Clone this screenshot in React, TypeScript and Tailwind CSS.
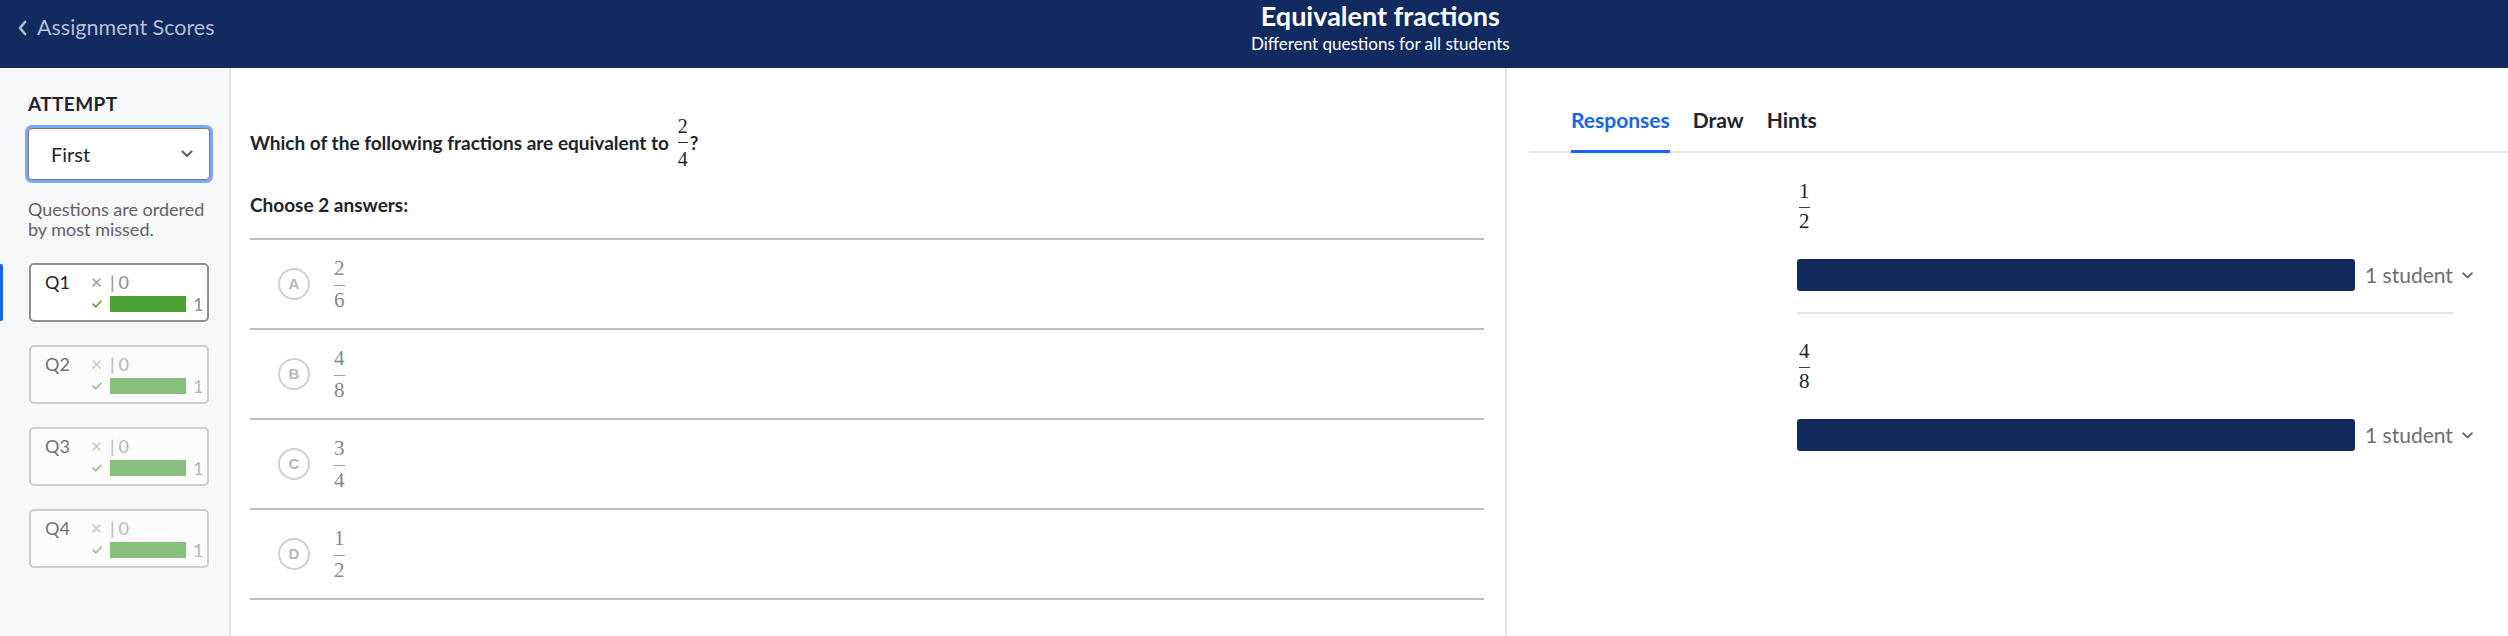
import React from "react";

function Frac({
  n,
  d,
  text,
  bar,
  gapTop,
  gapBottom,
}: {
  n: string;
  d: string;
  text: string;
  bar: string;
  gapTop: string;
  gapBottom: string;
}) {
  return (
    <span
      className={`inline-flex flex-col items-center px-[2px] font-['Liberation_Serif','DejaVu_Serif',serif] ${text}`}
    >
      <span className="leading-[20px]">{n}</span>
      <span className={`block self-stretch h-px ${bar} ${gapTop}`} />
      <span className={`leading-[20px] ${gapBottom}`}>{d}</span>
    </span>
  );
}

function XIcon({ color }: { color: string }) {
  return (
    <svg width="9" height="9" viewBox="0 0 9 9" className="block">
      <path d="M1 1 L8 8 M8 1 L1 8" stroke={color} strokeWidth="1.5" strokeLinecap="round" />
    </svg>
  );
}

function CheckIcon({ color }: { color: string }) {
  return (
    <svg width="10" height="8" viewBox="0 0 10 8" className="block">
      <path d="M1 4.2 L3.8 6.8 L9 1.2" stroke={color} strokeWidth="1.6" fill="none" strokeLinecap="round" strokeLinejoin="round" />
    </svg>
  );
}

function QCard({ label, active }: { label: string; active: boolean }) {
  return (
    <div className="flex">
      <div className={`w-[3px] my-[1px] rounded-r-[2px] ${active ? "bg-[#1865f2]" : "bg-transparent"}`} />
      <div
        className={`ml-[26px] w-[180px] h-[59px] rounded-[5px] border-2 flex items-start pt-[7px] pl-[14px] ${
          active ? "border-[#8e9094] bg-white" : "border-[#cdced1] bg-[#fcfcfd]"
        }`}
      >
        <div className={`w-[47px] text-[18px] leading-[20px] ${active ? "text-[#21242c]" : "text-[#6f7276]"}`}>{label}</div>
        <div className="flex flex-col">
          <div className="flex items-center h-[20px]">
            <div className="w-[18px] flex items-center">
              <XIcon color={active ? "#9a9c9f" : "#c3c5c8"} />
            </div>
            <span className={`text-[18px] leading-[20px] ${active ? "text-[#8a8d91]" : "text-[#b5b7ba]"}`}>|</span>
            <span className={`ml-[4px] text-[18px] leading-[20px] ${active ? "text-[#8a8d91]" : "text-[#b5b7ba]"}`}>0</span>
          </div>
          <div className="flex items-center h-[16px] mt-[4px]">
            <div className="w-[18px] flex items-center">
              <CheckIcon color={active ? "#4ba13a" : "#8cc882"} />
            </div>
            <div className={`w-[76px] h-[16px] ${active ? "bg-[#4ba233]" : "bg-[#88c07e]"}`} />
            <span className={`ml-[7px] text-[18px] leading-[16px] ${active ? "text-[#8a8d91]" : "text-[#b5b7ba]"}`}>1</span>
          </div>
        </div>
      </div>
    </div>
  );
}

function Option({ letter, n, d }: { letter: string; n: string; d: string }) {
  return (
    <div className="flex items-center h-[90px] border-b-2 border-[#bcbfc3] pl-[28px]">
      <div className="w-[32px] h-[32px] rounded-full border-2 border-[#cfd0d3] flex items-center justify-center text-[15px] font-bold text-[#b6b8bb] font-['Liberation_Sans',sans-serif]">
        {letter}
      </div>
      <div className="ml-[22px] flex">
        <Frac n={n} d={d} text="text-[21px] text-[#85888c]" bar="bg-[#9a9da1]" gapTop="mt-[7px]" gapBottom="mt-[4px]" />
      </div>
    </div>
  );
}

function Response({ n, d }: { n: string; d: string }) {
  return (
    <div>
      <div className="flex">
        <Frac n={n} d={d} text="text-[21px] text-[#21242c]" bar="bg-[#3b3e44]" gapTop="mt-[6px]" gapBottom="mt-[3px]" />
      </div>
      <div className="flex items-center mt-[28px] whitespace-nowrap">
        <div className="w-[558px] h-[32px] shrink-0 rounded-[3px] bg-[#112b5f]" />
        <span className="ml-[10px] text-[21px] leading-[24px] text-[#6b6e73]">1 student</span>
        <svg width="11" height="7" viewBox="0 0 11 7" className="ml-[9px] shrink-0">
          <path d="M1.2 1.2 L5.5 5.4 L9.8 1.2" stroke="#6b6e73" strokeWidth="1.9" fill="none" strokeLinecap="round" strokeLinejoin="round" />
        </svg>
      </div>
    </div>
  );
}

export default function App() {
  return (
    <div className="w-[2508px] h-[636px] flex flex-col bg-white font-['Lato','Noto_Sans',sans-serif] overflow-hidden">
      {/* Header */}
      <header className="h-[68px] shrink-0 bg-[#112a5f] flex">
        <div className="w-[1251px] shrink-0 flex items-start pt-[14px] pl-[17px]">
          <svg width="10" height="26" viewBox="0 0 10 26" className="block">
            <path d="M8 8 L3 14 L8 20" stroke="#b6bfd4" strokeWidth="2.6" fill="none" strokeLinecap="round" strokeLinejoin="round" />
          </svg>
          <span className="ml-[10px] text-[21.5px] leading-[26px] text-[#b6bfd4]">Assignment Scores</span>
        </div>
        <div className="flex flex-col items-center">
          <div className="text-[27px] leading-[32px] font-bold text-white">Equivalent fractions</div>
          <div className="mt-[2px] text-[17px] leading-[20px] text-white">Different questions for all students</div>
        </div>
      </header>

      <div className="flex flex-1 min-h-0">
        {/* Sidebar */}
        <aside className="w-[231px] shrink-0 bg-[#f7f8fa] border-r-2 border-[#e3e4e6] pt-[24px]">
          <div className="pl-[28px]">
            <div className="text-[19px] leading-[24px] font-bold tracking-[0.4px] text-[#21242c]">ATTEMPT</div>
            <div className="mt-[12px] w-[182px] h-[52px] rounded-[4px] border-[1.5px] border-[#77797d] bg-white shadow-[0_0_0_3px_rgba(24,101,242,0.55)] flex items-center justify-between pl-[22px] pr-[16px]">
              <span className="text-[20px] leading-[24px] text-[#21242c]">First</span>
              <svg width="12" height="8" viewBox="0 0 12 8">
                <path d="M1.5 1.5 L6 6 L10.5 1.5" stroke="#626569" strokeWidth="2.2" fill="none" strokeLinecap="round" strokeLinejoin="round" />
              </svg>
            </div>
            <div className="mt-[19px] text-[18px] leading-[20px] text-[#5f6267]">
              Questions are ordered
              <br />
              by most missed.
            </div>
          </div>
          <div className="mt-[24px] flex flex-col gap-[23px]">
            <QCard label="Q1" active={true} />
            <QCard label="Q2" active={false} />
            <QCard label="Q3" active={false} />
            <QCard label="Q4" active={false} />
          </div>
        </aside>

        {/* Main question */}
        <main className="flex-1 min-w-0 pl-[19px] pr-[21px] pt-[48px]">
          <div className="flex items-center text-[19px] leading-[24px] font-bold text-[#21242c]">
            <span>Which of the following fractions are equivalent to</span>
            <span className="ml-[7px] flex font-normal">
              <Frac n="2" d="4" text="text-[20px] text-[#21242c]" bar="bg-[#21242c]" gapTop="mt-[6px]" gapBottom="mt-[6px]" />
            </span>
            <span>?</span>
          </div>
          <div className="mt-[24px] text-[19px] leading-[24px] font-bold text-[#21242c]">Choose 2 answers:</div>
          <div className="mt-[21px] border-t-2 border-[#bcbfc3]">
            <Option letter="A" n="2" d="6" />
            <Option letter="B" n="4" d="8" />
            <Option letter="C" n="3" d="4" />
            <Option letter="D" n="1" d="2" />
          </div>
        </main>

        {/* Right panel */}
        <section className="w-[1003px] shrink-0 border-l-2 border-[#e3e4e6] pt-[40px]">
          <div className="ml-[22px] pl-[42px] flex gap-[23px] border-b-2 border-[#e4e5e7]">
            <div className="pb-[18px] border-b-[3px] border-[#1865f2] -mb-[2px] text-[21px] leading-[24px] font-bold text-[#1865f2]">
              Responses
            </div>
            <div className="pb-[18px] text-[21px] leading-[24px] font-bold text-[#21242c]">Draw</div>
            <div className="pb-[18px] text-[21px] leading-[24px] font-bold text-[#21242c]">Hints</div>
          </div>
          <div className="ml-[290px] w-[690px] pt-[28px]">
            <Response n="1" d="2" />
            <div className="mt-[21px] w-[656px] h-[2px] bg-[#e6e7e9]" />
            <div className="mt-[27px]">
              <Response n="4" d="8" />
            </div>
          </div>
        </section>
      </div>
    </div>
  );
}
